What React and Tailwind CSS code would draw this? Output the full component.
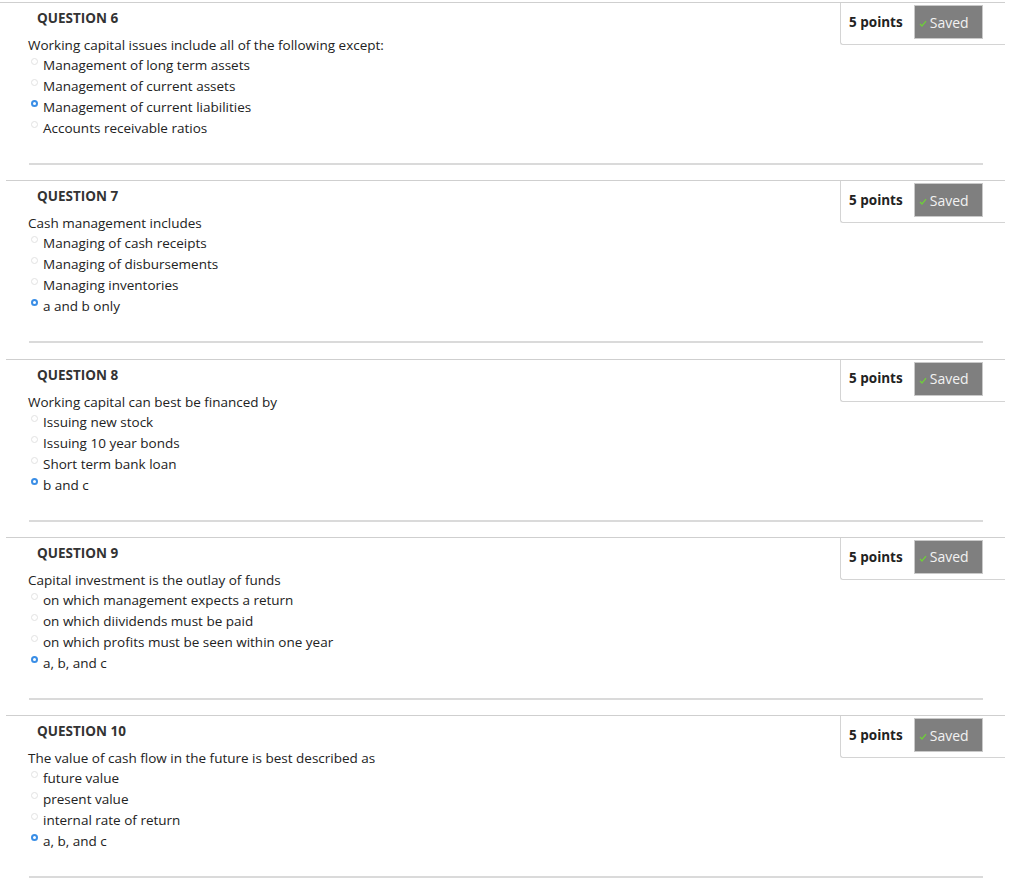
import React from 'react';

const questions = [
  {
    n: 6,
    text: 'Working capital issues include all of the following except:',
    options: [
      'Management of long term assets',
      'Management of current assets',
      'Management of current liabilities',
      'Accounts receivable ratios',
    ],
    selected: 2,
  },
  {
    n: 7,
    text: 'Cash management includes',
    options: [
      'Managing of cash receipts',
      'Managing of disbursements',
      'Managing inventories',
      'a and b only',
    ],
    selected: 3,
  },
  {
    n: 8,
    text: 'Working capital can best be financed by',
    options: ['Issuing new stock', 'Issuing 10 year bonds', 'Short term bank loan', 'b and c'],
    selected: 3,
  },
  {
    n: 9,
    text: 'Capital investment is the outlay of funds',
    options: [
      'on which management expects a return',
      'on which diividends must be paid',
      'on which profits must be seen within one year',
      'a, b, and c',
    ],
    selected: 3,
  },
  {
    n: 10,
    text: 'The value of cash flow in the future is best described as',
    options: ['future value', 'present value', 'internal rate of return', 'a, b, and c'],
    selected: 3,
  },
];

const Radio = ({ checked }) =>
  checked ? (
    <span className="absolute left-[-12px] top-[3px] w-[7px] h-[7px] rounded-full border-[2px] border-[#3a8ee6] bg-white" />
  ) : (
    <span className="absolute left-[-12px] top-[3px] w-[7px] h-[7px] rounded-full border border-[#e2e2e2] bg-white" />
  );

const Question = ({ q, first }) => (
  <div className="pl-[6px] pr-[19px]">
    <div className={`flex border-t border-[#cfcfcf] ${first ? '-ml-[6px]' : ''}`}>
      <div className={`flex-1 ${first ? 'pl-[28px]' : 'pl-[22px]'}`}>
        <div className="pl-[9px] pt-[6px] h-[24px] leading-[18px] text-[13.5px] font-bold text-[#333]">
          QUESTION {q.n}
        </div>
        <div className="mt-[9px] h-[19px] leading-[19px] text-[13.5px] text-[#222]">{q.text}</div>
        <div className="pl-[15px]">
          {q.options.map((o, i) => (
            <div key={o} className="relative h-[21px] leading-[21px] text-[13.5px] text-[#222]">
              <Radio checked={i === q.selected} />
              {o}
            </div>
          ))}
        </div>
      </div>
      <div className="w-[165px] h-[42px] self-start border-l border-b border-[#d4d4d4] rounded-bl-[3px] flex items-start pl-[8px] gap-[11px]">
        <span className="self-center mb-[3px] text-[13.5px] font-bold text-[#222]">5 points</span>
        <span className="w-[69px] h-[34px] mt-[2px] bg-[#7f7f7f] border border-[#c9c9c9] flex items-center pl-[4px] text-[14px] text-[#f2f2f2]">
          <svg width="8" height="7" viewBox="0 0 8 7" className="mr-[3px] mt-[3px]">
            <path d="M1 4 L3 6 L7 1.2" stroke="#6fcf3a" strokeWidth="1.3" fill="none" />
          </svg>
          Saved
        </span>
      </div>
    </div>
    <div className="mt-[24px] mb-[15.25px] ml-[23px] mr-[22px] border-t-[2px] border-[#dadada]" />
  </div>
);

export default function App() {
  return (
    <div className="w-[1024px] h-[893px] overflow-hidden bg-white pt-[2px]" style={{ fontFamily: '"Open Sans", "Liberation Sans", sans-serif' }}>
      {questions.map((q, i) => (
        <Question key={q.n} q={q} first={i === 0} />
      ))}
    </div>
  );
}
